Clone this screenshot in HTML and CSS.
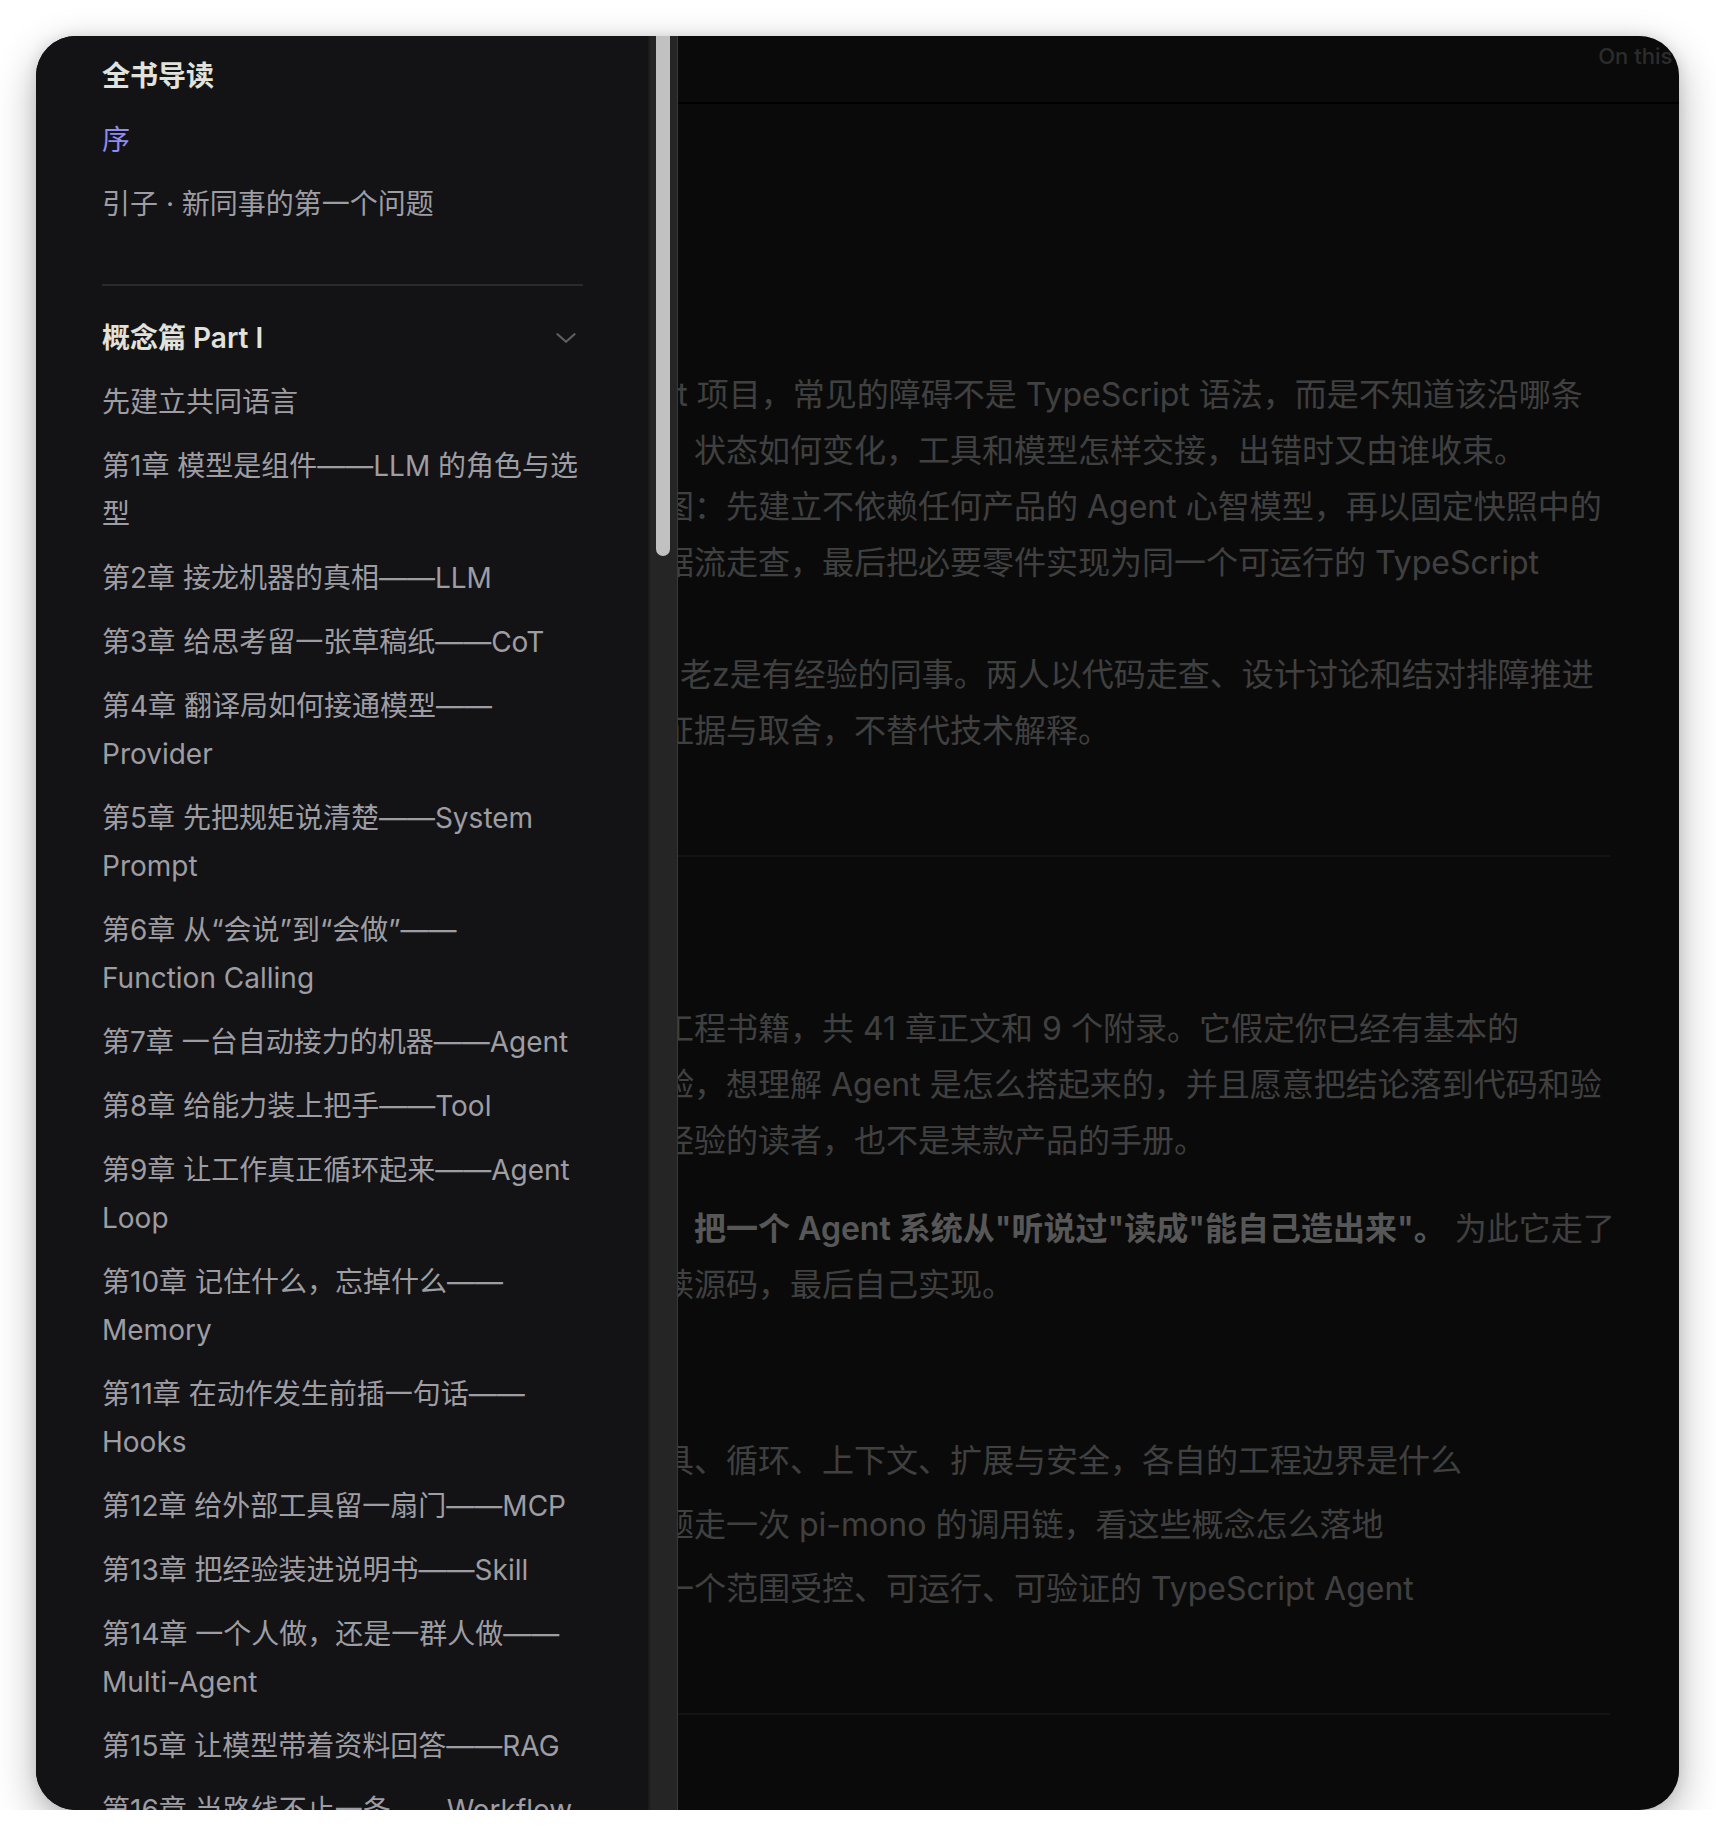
FILE: index.html
```html
<!DOCTYPE html>
<html lang="zh-CN">
<head>
<meta charset="utf-8">
<title>序</title>
<link rel="stylesheet" href="styles.css">
</head>
<body>
<div class="window">
  <div class="page">
    <header class="localnav">
      <span class="menu-btn">Menu</span>
      <span class="outline-btn">On this page</span>
    </header>
    <main class="doc">
      <h1>序</h1>
      <p>当你第一次打开一个较成熟的开源Agent 项目，常见的障碍不是 TypeScript 语法，而是不知道该沿哪条<br>线走：请求从哪里进入、经过哪些模块，状态如何变化，工具和模型怎样交接，出错时又由谁收束。<br>这本书提供了一张从概念到实现的路线图：先建立不依赖任何产品的 Agent 心智模型，再以固定快照中的<br>开源代码为样本，逐层展开调用链与数据流走查，最后把必要零件实现为同一个可运行的 TypeScript<br>Agent。<br>书中有两个角色：小a是刚入行的新人，老z是有经验的同事。两人以代码走查、设计讨论和结对排障推进<br>内容，对话只用来帮助呈现推理过程、证据与取舍，不替代技术解释。</p>
      <h2>这是一本什么书</h2>
      <p>这是一本讲如何从零构建智能体的软件工程书籍，共 41 章正文和 9 个附录。它假定你已经有基本的<br>编程能力，读过工程代码，也有开发经验，想理解 Agent 是怎么搭起来的，并且愿意把结论落到代码和验<br>证环节里去的人。它不是写给毫无工程经验的读者，也不是某款产品的手册。</p>
      <p>这本书想做的事情可以用一句话来概括：<strong>把一个 Agent 系统从"听说过"读成"能自己造出来"。</strong> 为此它走了<br>一条三段路径：先学概念，再对照项目读源码，最后自己实现。</p>
      <p>全书分为三部分：</p>
      <ul>
        <li>概念篇：理解模型、提示、记忆、工具、循环、上下文、扩展与安全，各自的工程边界是什么</li>
        <li>源码篇：对照真实仓库，围绕具体问题走一次 pi-mono 的调用链，看这些概念怎么落地</li>
        <li>实现篇：从零开始，按前文结论搭建一个范围受控、可运行、可验证的 TypeScript Agent</li>
      </ul>
      <h2>如何阅读本书</h2>
    </main>
  </div>
  <div class="backdrop"></div>
  <aside class="sidebar">
    <nav class="sidebar-nav">
      <section class="group">
        <h2 class="group-title">全书导读</h2>
        <a class="item active" href="#">序</a>
        <a class="item" href="#">引子 · 新同事的第一个问题</a>
      </section>
      <section class="group">
        <div class="group-head">
          <h2 class="group-title">概念篇 Part I</h2>
          <svg class="caret" viewBox="0 0 20 10" aria-hidden="true"><path d="M1.5 1.2l8.5 7.6 8.5-7.6"/></svg>
        </div>
        <a class="item" href="#">先建立共同语言</a>
        <a class="item" href="#">第1章 模型是组件——LLM 的角色与选<br>型</a>
        <a class="item" href="#">第2章 接龙机器的真相——LLM</a>
        <a class="item" href="#">第3章 给思考留一张草稿纸——CoT</a>
        <a class="item" href="#">第4章 翻译局如何接通模型——<br>Provider</a>
        <a class="item" href="#">第5章 先把规矩说清楚——System<br>Prompt</a>
        <a class="item" href="#">第6章 从“会说”到“会做”——<br>Function Calling</a>
        <a class="item" href="#">第7章 一台自动接力的机器——Agent</a>
        <a class="item" href="#">第8章 给能力装上把手——Tool</a>
        <a class="item" href="#">第9章 让工作真正循环起来——Agent<br>Loop</a>
        <a class="item" href="#">第10章 记住什么，忘掉什么——<br>Memory</a>
        <a class="item" href="#">第11章 在动作发生前插一句话——<br>Hooks</a>
        <a class="item" href="#">第12章 给外部工具留一扇门——MCP</a>
        <a class="item" href="#">第13章 把经验装进说明书——Skill</a>
        <a class="item" href="#">第14章 一个人做，还是一群人做——<br>Multi-Agent</a>
        <a class="item" href="#">第15章 让模型带着资料回答——RAG</a>
        <a class="item" href="#">第16章 当路线不止一条——Workflow</a>
        <a class="item" href="#">第17章 上下文不是无限的——Context</a>
      </section>
    </nav>
    <div class="scrollbar"><div class="thumb"></div></div>
  </aside>
</div>
</body>
</html>
```

FILE: styles.css
```css
html, body {
  margin: 0;
  padding: 0;
}

body {
  background: #ffffff;
  font-family: Inter, "Noto Sans CJK SC", sans-serif;
  overflow: hidden;
}

.window {
  position: relative;
  width: 1643px;
  height: 1774px;
  margin: 36px 0 0 36px;
  border-radius: 40px;
  overflow: hidden;
  background: #1b1b1b;
  box-shadow: 0 14px 40px rgba(0, 0, 0, 0.30), 0 0 14px rgba(0, 0, 0, 0.10);
}

/* ---------- page under the drawer ---------- */
.page {
  height: 100%;
  color: #a0a0a0;
}

.localnav {
  display: flex;
  justify-content: space-between;
  align-items: flex-start;
  box-sizing: border-box;
  height: 68px;
  padding: 6px 0 0 64px;
  border-bottom: 2px solid #000000;
  font-size: 22px;
  line-height: 28px;
  font-weight: 500;
  color: #6e6e6e;
}

.outline-btn {
  margin-right: -52px;
  white-space: nowrap;
}

.doc {
  padding: 96px 69px 0 82px;
}

.doc h1 {
  margin: 0 0 87px;
  font-size: 64px;
  line-height: 80px;
  font-weight: 600;
  color: #dadada;
}

.doc p {
  margin: 32px 0;
  font-size: 32px;
  line-height: 56px;
  white-space: nowrap;
}

.doc strong {
  font-weight: 600;
  color: #dadada;
}

.doc h2 {
  margin: 96px 0 32px;
  padding-top: 48px;
  border-top: 2px solid #323232;
  font-size: 48px;
  line-height: 64px;
  font-weight: 600;
  color: #dadada;
}

.doc ul {
  margin: 28px 0 32px;
  padding-left: 32px;
}

.doc li {
  font-size: 32px;
  line-height: 56px;
  white-space: nowrap;
}

.doc li + li {
  margin-top: 8px;
}

.backdrop {
  position: absolute;
  inset: 0;
  background: rgba(0, 0, 0, 0.6);
}

/* ---------- drawer ---------- */
.sidebar {
  position: absolute;
  top: 0;
  left: 0;
  bottom: 0;
  display: flex;
  background: #131315;
}

.sidebar-nav {
  width: 612px;
  box-sizing: border-box;
  padding: 8px 65px 0 66px;
  overflow: hidden;
  font-size: 28px;
  line-height: 48px;
}

.group {
  padding-bottom: 48px;
}

.group + .group {
  border-top: 2px solid #2a2a2e;
  padding-top: 20px;
}

.group-head {
  display: flex;
  align-items: center;
  justify-content: space-between;
}

.group-title {
  margin: 0;
  padding: 8px 0;
  font-size: 28px;
  line-height: 48px;
  font-weight: 600;
  color: #e2e2dc;
}

.caret {
  width: 20px;
  height: 10px;
  margin-right: 7px;
}

.caret path {
  fill: none;
  stroke: #5e5e63;
  stroke-width: 2.2;
  stroke-linecap: round;
  stroke-linejoin: round;
}

.item {
  display: block;
  padding: 8px 0;
  color: #9d9da3;
  text-decoration: none;
}

.item.active {
  color: #8f8bf0;
}

.scrollbar {
  width: 30px;
  box-sizing: border-box;
  background: #252525;
  border-left: 2px solid #1c1c1c;
  border-right: 1px solid #393939;
}

.thumb {
  width: 14px;
  height: 520px;
  margin-left: 6px;
  background: #c1c1c1;
  border-radius: 0 0 7px 7px;
}
```
